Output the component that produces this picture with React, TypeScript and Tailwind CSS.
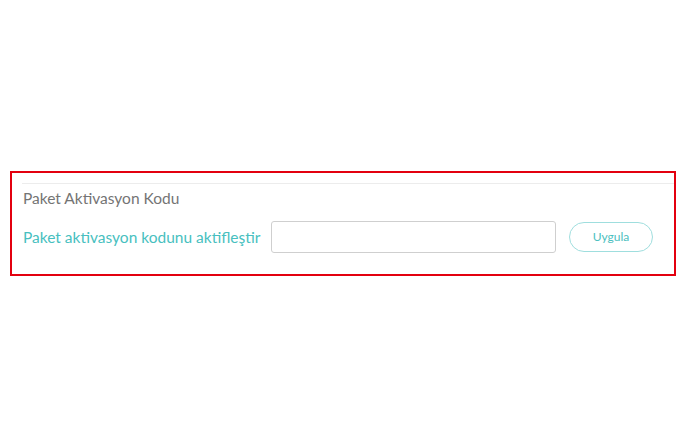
import React from "react";

const App = () => {
  return (
    <div className="min-h-[434px] w-[681px] bg-white pt-[171px] pl-[10px] font-['Lato',sans-serif]">
      <div className="h-[105px] w-[666px] border-2 border-[#e3000f] pl-[10px]">
        <div className="mt-[10px] border-t border-[#ececec] pl-[1px]">
          <h2 className="mt-[4px] text-[15.5px] leading-[20px] text-[#747474]">
            Paket Aktivasyon Kodu
          </h2>
          <div className="mt-[13px] flex items-center">
            <label className="w-[248px] text-[15.5px] leading-[20px] text-[#48bfc0]">
              Paket aktivasyon kodunu aktifleştir
            </label>
            <input
              type="text"
              className="h-[32px] w-[285px] rounded-[3px] border border-[#cfcfcf] bg-white px-2 text-sm outline-none"
            />
            <button className="ml-[13px] h-[30px] w-[84px] rounded-full border border-[#9fdede] text-[12px] text-[#4cc0c0]">
              Uygula
            </button>
          </div>
        </div>
      </div>
    </div>
  );
};

export default App;
